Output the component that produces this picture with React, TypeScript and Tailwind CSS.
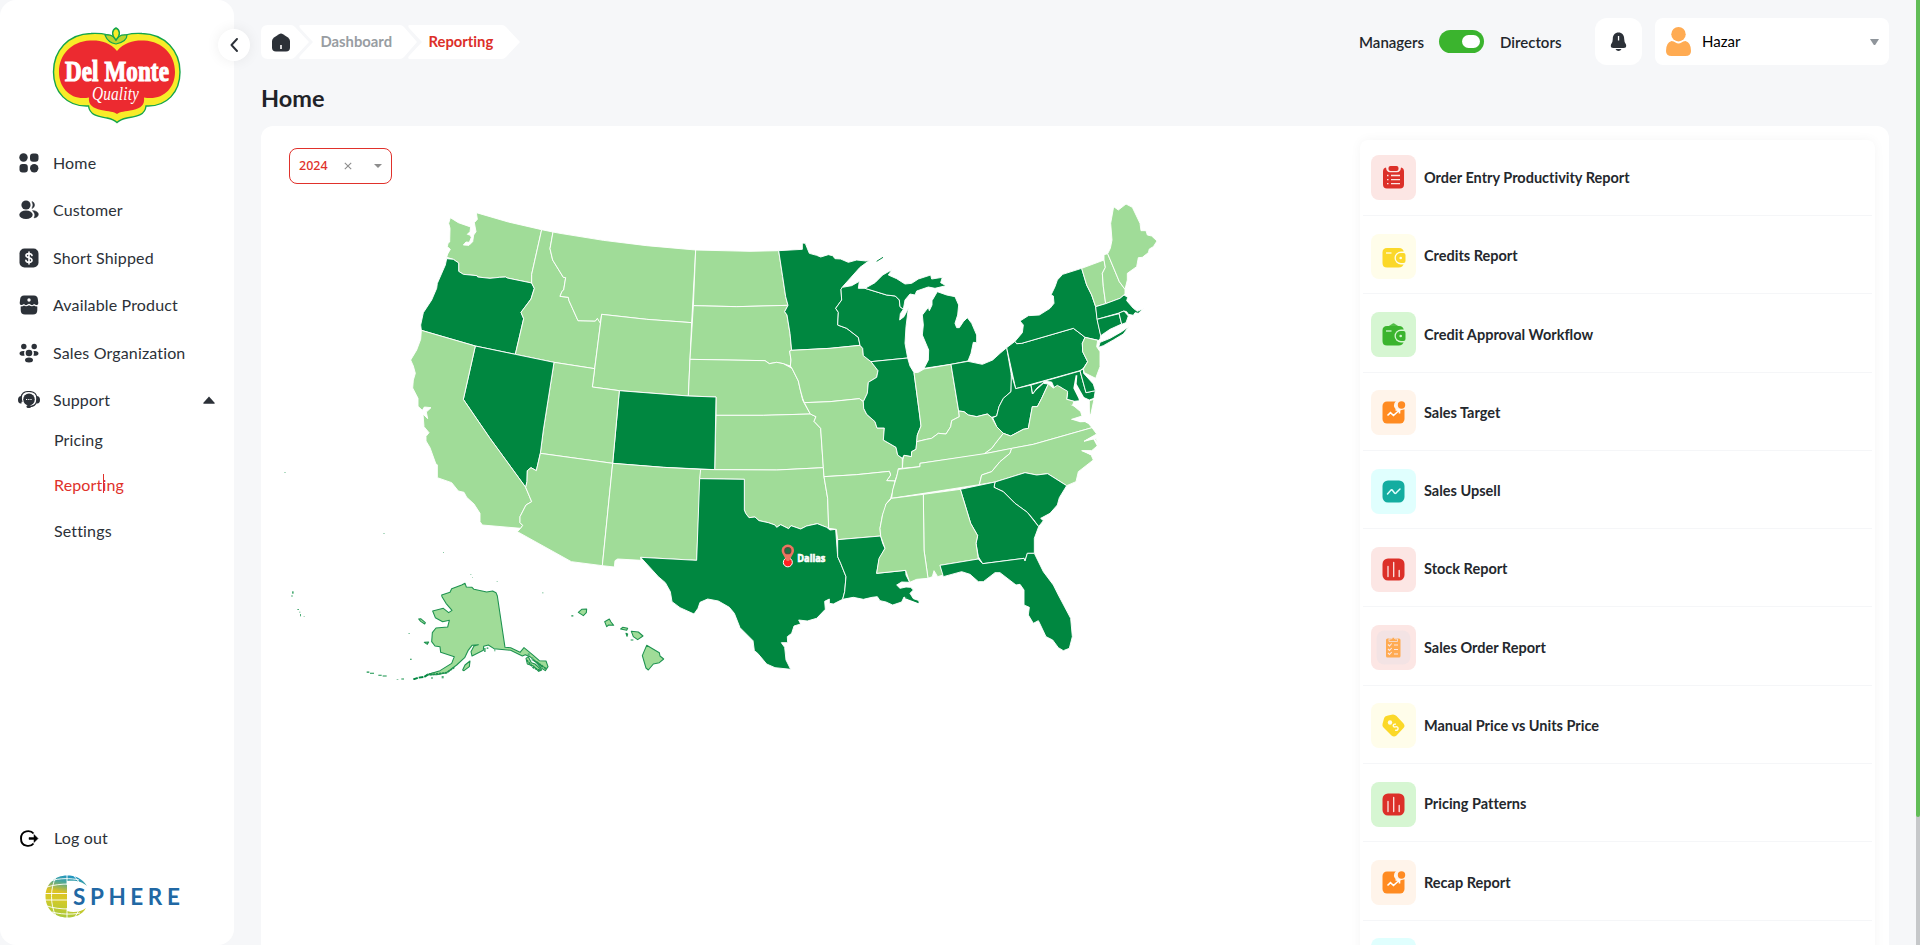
import React from "react";

const LIGHT = "#a0dc98";
const DARK = "#008740";

type Shape = { id: string; dark?: boolean; d: string };

const STATES: Shape[] = [
  { id: "WA", d: "541,113 565,128 602,141 600,155 592,163 600,165 604,172 598,187 588,186 580,195 597,196 608,185 611,165 618,155 613,128 622,118 619,98 715,126 815,149 785,283 785,309 712,294 707,291 688,292 660,295 623,291 621,287 580,283 566,274 566,249 550,238 530,232 533,222 541,208 532,200 534,190 539,186 540,145 536,130" },
  { id: "OR", dark: true, d: "530,236 550,238 566,249 566,274 580,283 621,287 623,291 660,295 688,292 707,291 712,294 785,309 793,325 783,357 753,397 761,416 736,523 616,498 454,451 452,435 460,398 485,360 500,325 502,310 526,255" },
  { id: "ID", d: "815,149 849,156 840,206 848,240 880,292 887,293 881,330 876,334 870,349 895,352 897,362 924,422 976,423 982,415 992,427 974,566 852,547 736,523 761,416 753,397 783,357 793,325 785,309 785,283" },
  { id: "MT", d: "849,156 870,160 1000,181 1130,197 1277,210 1265,428 1130,418 995,403 991,430 982,415 976,423 924,422 897,362 895,352 870,349 876,334 881,330 887,293 880,292 848,240 840,206" },
  { id: "WY", d: "995,403 1130,418 1265,428 1255,648 1048,632 967,621" },
  { id: "ND", d: "1277,210 1440,214 1526,212 1538,290 1547,350 1554,376 1400,380 1270,377" },
  { id: "SD", d: "1270,377 1400,380 1554,376 1544,395 1551,405 1560,460 1565,511 1559,513 1563,540 1561,558 1540,551 1520,547 1498,551 1485,542 1260,538" },
  { id: "NE", d: "1260,538 1485,542 1498,551 1520,547 1540,551 1566,565 1585,603 1591,630 1598,660 1603,670 1621,702 1480,706 1338,706 1338,651 1255,648" },
  { id: "KS", d: "1338,706 1480,706 1621,702 1638,710 1632,724 1652,745 1660,863 1520,870 1334,869" },
  { id: "CO", dark: true, d: "1048,632 1255,648 1338,651 1334,869 1180,862 1028,850" },
  { id: "UT", d: "852,547 974,566 967,621 1048,632 1028,850 811,820 820,750" },
  { id: "NV", dark: true, d: "616,498 736,523 852,547 820,750 811,820 799,872 783,863 772,872 771,905 767,922 660,775 580,658" },
  { id: "CA", d: "454,451 616,498 580,658 660,775 767,922 785,965 768,975 750,1010 750,1028 758,1036 752,1045 637,1035 630,1025 630,1000 612,972 590,952 582,937 565,933 545,908 502,893 502,855 497,850 480,803 468,783 468,769 477,758 462,740 459,702 473,716 469,696 483,683 463,681 457,691 444,679 444,655 428,624 430,600 436,580 430,558 422,540 440,510 452,478" },
  { id: "AZ", d: "811,820 1028,850 997,1157 904,1145 742,1055 752,1045 758,1036 750,1028 750,1010 768,975 785,965 767,922 771,905 772,872 783,863 799,872" },
  { id: "NM", d: "1028,850 1180,862 1292,868 1280,1141 1112,1132 1113,1141 1043,1137 1035,1142 1033,1161 997,1157" },
  { id: "OK", d: "1292,868 1334,869 1520,870 1660,863 1662,890 1673,955 1676,1045 1670,1042 1642,1031 1610,1038 1592,1047 1563,1037 1556,1046 1532,1034 1520,1042 1515,1035 1495,1028 1467,1022 1455,1011 1437,1013 1427,1000 1423,990 1423,898 1289,896" },
  { id: "TX", dark: true, d: "1289,896 1423,898 1423,990 1427,1000 1437,1013 1455,1011 1467,1022 1495,1028 1515,1035 1520,1042 1532,1034 1556,1046 1563,1037 1592,1047 1610,1038 1642,1031 1670,1042 1680,1050 1697,1048 1703,1130 1712,1150 1728,1190 1724,1235 1718,1258 1690,1272 1678,1270 1678,1257 1664,1264 1666,1288 1640,1315 1612,1323 1586,1320 1592,1332 1572,1338 1565,1360 1552,1370 1553,1388 1534,1388 1544,1402 1548,1440 1562,1468 1515,1463 1490,1452 1463,1420 1453,1412 1449,1382 1410,1343 1393,1300 1378,1282 1345,1263 1313,1257 1290,1267 1284,1285 1272,1302 1230,1283 1206,1265 1201,1235 1186,1208 1165,1190 1112,1132 1280,1141" },
  { id: "MN", dark: true, d: "1526,212 1597,208 1597,189 1606,190 1611,203 1618,220 1640,226 1652,231 1675,224 1688,227 1695,236 1712,237 1735,247 1760,240 1788,243 1800,240 1770,262 1718,320 1713,328 1715,360 1697,385 1705,397 1703,435 1730,445 1765,472 1770,496 1680,505 1565,511 1560,460 1551,405 1544,395 1554,376 1547,350 1538,290" },
  { id: "IA", d: "1565,511 1680,505 1770,496 1778,505 1780,527 1803,545 1824,572 1820,592 1795,607 1792,640 1780,665 1768,656 1680,665 1603,668 1598,655 1591,630 1585,603 1566,565 1561,558 1563,540 1559,513" },
  { id: "MO", d: "1603,668 1680,665 1768,656 1780,665 1781,685 1790,703 1815,725 1821,744 1843,744 1840,780 1878,802 1883,825 1897,835 1897,865 1885,866 1883,880 1875,903 1850,902 1862,885 1858,874 1760,884 1662,890 1660,863 1652,745 1632,724 1638,710 1621,702" },
  { id: "AR", d: "1662,890 1760,884 1858,874 1862,885 1850,902 1875,903 1868,935 1862,955 1848,972 1846,990 1838,1003 1830,1045 1832,1068 1703,1079 1699,1048 1676,1045 1673,955" },
  { id: "LA", dark: true, d: "1703,1079 1832,1068 1838,1090 1845,1105 1827,1140 1820,1180 1907,1171 1908,1185 1919,1207 1895,1206 1880,1215 1890,1225 1908,1221 1922,1222 1930,1230 1920,1240 1930,1256 1948,1262 1944,1270 1915,1258 1902,1251 1895,1266 1868,1275 1848,1266 1830,1262 1822,1250 1806,1252 1780,1258 1750,1252 1718,1258 1724,1235 1728,1190 1712,1150 1703,1130" },
  { id: "WI", dark: true, d: "1717,322 1745,317 1768,304 1765,325 1785,325 1850,345 1876,348 1888,360 1890,380 1900,388 1891,401 1889,420 1902,410 1915,385 1908,440 1905,490 1913,534 1803,545 1780,527 1778,505 1770,496 1765,472 1730,445 1703,435 1705,397 1697,385 1715,360 1713,328" },
  { id: "MI-U", dark: true, d: "1785,325 1815,308 1838,285 1866,269 1855,285 1880,296 1905,312 1925,310 1945,297 1982,285 1985,297 2017,292 2012,308 2028,317 1995,325 1975,321 1940,333 1935,345 1920,342 1905,360 1900,388 1890,380 1888,360 1876,348 1850,345" },
  { id: "MI-L", dark: true, d: "2002,335 2030,345 2055,350 2066,375 2063,405 2055,430 2060,443 2068,443 2080,425 2092,413 2105,430 2120,465 2120,488 2110,487 2103,520 2094,543 2043,553 1962,565 1975,540 1976,510 1957,465 1960,435 1957,405 1975,382 1978,392 1986,375 1986,362" },
  { id: "IL", dark: true, d: "1803,545 1913,534 1920,558 1932,578 1949,705 1953,738 1942,765 1940,790 1938,808 1925,815 1924,830 1902,826 1897,835 1883,825 1878,802 1840,780 1843,744 1821,744 1815,725 1790,703 1781,685 1780,665 1792,640 1795,607 1820,592 1824,572" },
  { id: "IN", d: "1932,578 1945,577 1962,567 2043,553 2066,693 2068,710 2045,722 2042,740 2028,762 2005,760 1985,775 1970,778 1940,785 1942,765 1953,738 1949,705" },
  { id: "OH", dark: true, d: "2043,553 2094,544 2137,553 2168,540 2190,520 2210,503 2225,590 2223,635 2200,655 2187,680 2180,708 2165,712 2152,702 2120,710 2095,705 2082,695 2066,693" },
  { id: "PA", dark: true, d: "2210,503 2235,484 2240,491 2255,490 2410,445 2430,460 2445,472 2437,490 2438,515 2453,545 2440,565 2430,572 2237,626" },
  { id: "NY", dark: true, d: "2235,484 2257,458 2260,435 2250,423 2275,407 2308,405 2340,385 2352,370 2350,348 2343,345 2355,320 2362,300 2378,283 2435,265 2450,315 2465,345 2477,380 2482,418 2492,465 2490,478 2485,481 2445,472 2430,460 2410,445 2255,490 2240,491" },
  { id: "LI", dark: true, d: "2486,502 2490,487 2520,475 2555,455 2576,440 2560,462 2530,480 2500,497" },
  { id: "VT", d: "2435,265 2502,240 2506,262 2497,280 2500,320 2507,371 2477,380 2465,345 2450,315" },
  { id: "NH", d: "2502,240 2502,224 2513,221 2548,305 2565,328 2565,342 2550,355 2507,371 2500,320 2497,280 2506,262" },
  { id: "ME", d: "2513,221 2521,205 2526,180 2522,130 2531,80 2545,90 2568,72 2587,82 2610,130 2613,152 2628,152 2632,165 2645,168 2661,183 2650,200 2638,207 2635,218 2617,232 2605,233 2600,260 2572,280 2572,300 2565,328 2548,305" },
  { id: "MA", dark: true, d: "2477,380 2507,371 2550,355 2562,345 2573,352 2570,362 2590,385 2602,394 2620,386 2605,400 2595,398 2590,406 2575,403 2570,395 2562,393 2547,399 2481,418" },
  { id: "CT", dark: true, d: "2481,418 2547,401 2555,432 2520,448 2492,467" },
  { id: "RI", dark: true, d: "2547,399 2562,393 2575,408 2568,428 2555,433" },
  { id: "NJ", d: "2445,472 2483,481 2480,500 2490,515 2490,560 2477,595 2443,578 2440,567 2453,545 2438,515 2437,490" },
  { id: "WV", dark: true, d: "2224,582 2237,626 2283,615 2287,642 2300,628 2320,610 2335,612 2315,655 2302,680 2287,680 2275,745 2260,748 2222,768 2200,760 2180,740 2168,713 2180,708 2187,680 2200,655 2223,635" },
  { id: "MD", dark: true, d: "2283,615 2430,573 2448,638 2476,632 2472,655 2458,660 2440,652 2425,640 2430,662 2412,664 2390,658 2393,640 2372,622 2352,622 2345,606 2325,604 2300,625 2288,642" },
  { id: "DE", dark: true, d: "2430,572 2440,567 2441,580 2470,612 2476,632 2448,638" },
  { id: "VA", d: "2335,612 2350,624 2362,616 2393,634 2390,658 2412,664 2408,675 2432,695 2436,708 2405,718 2440,722 2455,730 2466,743 2290,793 2150,820 2140,823 2165,805 2180,785 2200,760 2222,768 2260,748 2275,745 2287,680 2302,680 2315,655" },
  { id: "ESVA", d: "2458,662 2472,658 2463,700 2458,710" },
  { id: "KY", d: "1897,865 1899,838 1902,826 1924,830 1925,815 1938,808 1940,785 1970,778 1985,775 2005,760 2028,762 2042,740 2045,722 2068,710 2066,693 2082,695 2095,705 2120,710 2152,702 2165,712 2180,740 2200,760 2180,785 2165,805 2140,823 1950,850 1950,860" },
  { id: "TN", d: "1885,868 1950,860 1950,850 2150,820 2225,805 2220,820 2190,845 2165,875 2135,885 2128,914 1865,955 1868,930 1880,890" },
  { id: "NC", d: "2225,805 2290,793 2466,743 2480,762 2442,784 2478,775 2485,795 2465,812 2435,812 2463,824 2470,840 2425,875 2418,905 2390,917 2333,881 2300,885 2265,878 2175,906 2128,914 2135,885 2165,875 2190,845 2220,820" },
  { id: "SC", dark: true, d: "2175,906 2265,878 2300,885 2333,881 2390,917 2368,953 2362,975 2340,1000 2312,1015 2320,1022 2306,1040 2290,1018 2272,997 2235,970 2200,935 2172,922" },
  { id: "GA", dark: true, d: "2071,928 2175,906 2172,922 2200,935 2235,970 2272,997 2306,1040 2293,1075 2293,1120 2272,1120 2265,1143 2262,1135 2138,1151 2125,1130 2118,1090 2123,1067 2102,1030" },
  { id: "AL", d: "1960,943 2071,928 2102,1030 2123,1067 2118,1090 2125,1137 2010,1156 2020,1185 2003,1190 1992,1172 1987,1190 1974,1195 1962,1110" },
  { id: "MS", d: "1865,955 1960,943 1962,1110 1974,1195 1940,1198 1919,1207 1907,1171 1820,1180 1827,1135 1845,1105 1832,1068 1830,1045 1838,1003 1848,972" },
  { id: "FL", dark: true, d: "2010,1156 2125,1137 2138,1151 2262,1135 2265,1143 2272,1120 2293,1120 2320,1175 2350,1215 2365,1245 2402,1315 2407,1370 2398,1405 2380,1412 2365,1403 2348,1380 2328,1370 2310,1332 2305,1322 2290,1330 2275,1305 2278,1282 2262,1275 2262,1230 2250,1213 2238,1215 2190,1178 2175,1178 2140,1205 2125,1205 2100,1183 2075,1175 2020,1190" },
];

const OUTLINED = [
  "515,1245 540,1237 545,1226 575,1215 585,1210 589,1221 606,1222 612,1228 650,1236 668,1233 678,1238 682,1248 705,1402 722,1403 750,1417 762,1403 790,1426 808,1442 828,1443 834,1460 826,1472 812,1463 798,1446 780,1430 766,1424 757,1428 722,1411 672,1406 655,1395 641,1399 640,1411 606,1428 603,1415 612,1398 625,1394 606,1396 594,1412 584,1433 560,1455 530,1478 500,1484 470,1484 510,1472 545,1450 553,1430 512,1417 510,1400 495,1398 485,1385 487,1358 498,1344 533,1341 538,1321 518,1325 496,1313 488,1293 520,1285 536,1298 546,1291 528,1270 516,1250",
  "578,1470 585,1455 600,1443 598,1460 582,1472",
  "768,1435 775,1430 784,1448 795,1452 815,1470 806,1474 790,1458 772,1452",
  "446,1317 452,1316 466,1328 464,1332 452,1324",
  "463,1387 476,1386 472,1393",
  "925,1297 935,1288 950,1287 949,1298 940,1307",
  "1004,1325 1018,1317 1023,1326 1031,1336 1016,1335 1010,1340",
  "1052,1347 1058,1342 1073,1345 1070,1351",
  "1084,1354 1105,1356 1119,1368 1103,1379 1090,1370",
  "1068,1360 1073,1362 1071,1369",
  "1130,1396 1168,1418 1170,1428 1181,1437 1168,1448 1150,1452 1135,1470 1128,1464 1117,1427",
];

const SPECKS: [number, number, number, number][] = [
  [43, 876, 4, 2], [340, 1059, 4, 2], [519, 1116, 3, 2], [601, 1183, 3, 2], [606, 1191, 2, 2], [680, 1204, 3, 2],
  [66, 1234, 5, 7], [64, 1246, 4, 4], [82, 1287, 5, 3], [88, 1295, 3, 3], [90, 1302, 3, 7], [101, 1308, 3, 2],
  [415, 1359, 5, 2], [420, 1436, 5, 4], [817, 1237, 3, 3], [904, 1305, 6, 5], [1082, 1378, 8, 4],
  [290, 1474, 8, 5], [300, 1478, 12, 4], [325, 1484, 10, 4], [338, 1486, 12, 4], [380, 1497, 5, 2], [394, 1495, 8, 4],
  [412, 1500, 4, 2], [515, 1488, 6, 7], [483, 1492, 6, 4], [642, 1404, 5, 12], [650, 1402, 5, 5], [673, 1405, 3, 9],
  [773, 1420, 6, 7], [785, 1432, 5, 10],
];

const UsMap = () => (
  <svg className="block h-[500px] w-[900px]" viewBox="0 0 2700 1500">
    {STATES.map((s) => (
      <polygon key={s.id} points={s.d} fill={s.dark ? DARK : LIGHT} stroke="#fff" strokeWidth="2.8" strokeLinejoin="round" />
    ))}
    <path d="M2417 586 L2422 586 L2420 612 L2432 634 L2444 655 L2456 668 L2460 712 L2460 732 L2448 728 L2438 690 L2400 674 L2432 678 L2425 655 L2410 625 Z" fill="#fff" />
    <path d="M2402 718 L2430 716 L2450 726 L2430 727 Z M2442 782 L2470 768 L2488 795 L2482 800 L2470 778 Z M2436 811 L2465 812 L2480 808 L2462 826 Z" fill="#fff" />
    <path d="M1820 244 L1839 232 M1905 1253 L1946 1268" stroke={DARK} strokeWidth="3" />
    <path d="M430 1498 L445 1493 L462 1491 L475 1483 L500 1479 L520 1476" stroke={DARK} strokeWidth="6" strokeDasharray="14 3" fill="none" />
    {OUTLINED.map((d) => (
      <polygon key={d} points={d} fill={LIGHT} stroke="#1d9250" strokeWidth="3.2" strokeLinejoin="round" />
    ))}
    <path d="M480 1484 L530 1478 L553 1462 M770 1440 L790 1463 L812 1472 M790 1440 L820 1462 M800 1446 L828 1466" stroke="#1d9250" strokeWidth="5" strokeDasharray="7 2" fill="none" />
    {SPECKS.map(([x, y, w, h]) => (
      <rect key={`${x}-${y}`} x={x} y={y} width={w} height={h} fill="#4fae78" />
    ))}
    <circle cx="1553.500" cy="1147" r="13.500" fill="#f22" stroke="#fff" strokeWidth="3" />
    <path d="M1550 1143 L1536.500 1119 A18.500 18.500 0 1 1 1570.500 1119 L1557 1143 Z" fill="#ee7460" />
    <circle cx="1553.500" cy="1112" r="11" fill="#5a4a3c" />
    <circle cx="1553.500" cy="1112" r="8" fill="#1f6f42" />
    <text x="1582" y="1146" textLength="84" lengthAdjust="spacingAndGlyphs" fontFamily="Open Sans, Noto Sans, sans-serif" fontSize="33" fontWeight="700" fill="#fff" stroke="#fff" strokeWidth="2">Dallas</text>
  </svg>
);

const DelMonteLogo = () => (
  <svg className="h-[98px] w-[130px]" viewBox="0 0 130 98">
    <path d="M65 12 C72 7 81 6 90 6.500 C113 7 128 24 128 45 C128 65 115 80 94 79 C93 89 83 89.500 75 91 C70 92 67 93.500 65 95.500 C63 93.500 60 92 55 91 C47 89.500 38 89 36.500 79 C15 80 1.500 65 1.500 45 C1.500 24 16 7 39 6.500 C49 6 58 7 65 12 Z" fill="#f8ec28" stroke="#14a54c" strokeWidth="1.400" />
    <path d="M65 24 C72 15 83 13 92 13.500 C111 14.500 123 28 123 45 C123 62 110 74 92 70.500 C93 78 89 81 81 83 C73 84.500 68 84.500 65 87 C62 84.500 57 84.500 49 83 C41 81 36 78 37 70.500 C20 74 7 62 7 45 C7 28 19 14.500 38 13.500 C48 13 58 15 65 24 Z" fill="#ec2a30" />
    <path d="M64 17 C54 15 54 9 53 8 C59 7 62 9 64 13 C66 9 69 7 75 8 C75 12 73 15 64 17 Z" fill="#b9d52d" stroke="#14a54c" strokeWidth="1.200" />
    <path d="M64 13 C59 8 60 3 64 1 C68 3 69 8 64 13 Z" fill="#f8ec28" stroke="#14a54c" strokeWidth="1.400" />
    <text x="13" y="53.500" textLength="104" lengthAdjust="spacingAndGlyphs" fontFamily="Liberation Serif, serif" fontSize="29" fontWeight="700" fill="#fff" stroke="#fff" strokeWidth="1.200">Del Monte</text>
    <text x="40" y="72.500" textLength="47" lengthAdjust="spacingAndGlyphs" fontFamily="Liberation Serif, serif" fontSize="18" fontStyle="italic" fill="#fff">Quality</text>
  </svg>
);

const SphereLogo = () => (
  <svg className="h-[46px] w-[136px]" viewBox="0 0 136 46">
    <defs>
      <linearGradient id="globe" x1="0.600" y1="0" x2="0.400" y2="1">
        <stop offset="0" stopColor="#1d93c4" />
        <stop offset="0.180" stopColor="#4aa79a" />
        <stop offset="0.420" stopColor="#dcc223" />
        <stop offset="0.600" stopColor="#d6ca28" />
        <stop offset="1" stopColor="#a9c93a" />
      </linearGradient>
    </defs>
    <path d="M42 12 C37 4 30 1.500 22 1.500 C10 1.500 0.500 10 0.500 22.500 C0.500 35 10 43.500 22 43.500 C30 43.500 37 41 41 34 C36 38 28 39 22 37 V7 C30 6 37 7 42 12 Z" fill="url(#globe)" />
    <path d="M0 19.500 H22 M0 26 H22 M2 13 C8 11 16 10 24 10 M2 32 C8 34 16 35 24 35 M6 7 C14 4 26 4 34 6 M7 38 C14 40 26 41 35 39 M22 0 V11 M22 34 V45 M11 3 C5 14 5 31 11 42 M29 2 L34 8 M34 36 L30 43" fill="none" stroke="#fff" strokeWidth="0.900" />
    <text x="28" y="30.500" textLength="107" fontFamily="Lato, sans-serif" fontSize="22.500" fontWeight="700" fill="#2168a4">SPHERE</text>
  </svg>
);

const ink = "#2c3138";

const navIcons: Record<string, React.ReactNode> = {
  Home: (
    <g fill={ink}><circle cx="4.500" cy="4.500" r="4.200" /><rect x="11" y="0.500" width="8.500" height="8.300" rx="3" /><rect x="0.500" y="11" width="8.300" height="8.500" rx="3" /><circle cx="15.200" cy="15.300" r="4.200" /></g>
  ),
  Customer: (
    <g fill={ink}><circle cx="7" cy="5" r="4.600" /><ellipse cx="7" cy="14.800" rx="6.700" ry="4.300" /><path d="M13 1.500 a3.700 3.700 0 0 1 0 7 a7 7 0 0 0 0 -7Z M13.500 10.700 c8 0 7 7 1.500 7.100 c1.500 -2 1 -5 -1.500 -7.100Z" stroke={ink} strokeWidth="0.600" /></g>
  ),
  "Short Shipped": (
    <g><rect x="0.500" y="0.500" width="19" height="19" rx="5" fill={ink} /><path d="M13 7.500 C12.500 5 7 5 7 7.600 C7 10.500 13 9.200 13 12.300 C13 15 7.300 15 6.900 12.400 M10 4 V16" fill="none" stroke="#fff" strokeWidth="1.600" strokeLinecap="round" /></g>
  ),
  "Available Product": (
    <g fill={ink}><path d="M5 0.500 H15 Q18.500 0.500 18.800 4 L19.300 8 Q19.500 10.500 17 10 L15 9 Q13.500 11 11.500 9.500 L10 8.700 L8.500 9.500 Q6.500 11 5 9 L3 10 Q0.500 10.500 0.700 8 L1.200 4 Q1.500 0.500 5 0.500Z" /><path d="M1.700 11.500 Q4 11.500 5 10.500 Q7 12 10 10.200 Q13 12 15 10.500 Q16 11.500 18.300 11.500 V15 Q18.300 19.500 14 19.500 H6 Q1.700 19.500 1.700 15Z" /><circle cx="10" cy="5" r="1.700" fill="#fff" /></g>
  ),
  "Sales Organization": (
    <g fill={ink}><circle cx="4.800" cy="3.500" r="2.700" /><circle cx="15.200" cy="3.500" r="2.700" /><circle cx="10" cy="10" r="3.300" /><ellipse cx="10" cy="17" rx="4" ry="2.500" /><path d="M5.500 8 Q0.500 7.500 0.500 10.500 Q0.500 13 5.500 12.800 Q4.500 10 5.500 8Z M14.500 8 Q19.500 7.500 19.500 10.500 Q19.500 13 14.500 12.800 Q15.500 10 14.500 8Z" /></g>
  ),
};

const NAV = ["Home", "Customer", "Short Shipped", "Available Product", "Sales Organization"];

const NavRow = ({ label }: { label: string }) => (
  <li className="flex h-[47.500px] items-center gap-[14px] pl-[19px]">
    <svg className="size-[20px]" viewBox="0 0 20 20">{navIcons[label]}</svg>
    <span>{label}</span>
  </li>
);

const Sidebar = () => (
  <aside className="relative flex h-full w-[234px] shrink-0 flex-col rounded-2xl bg-white text-[16px] tracking-[0.150px] text-[#2c3138]">
    <div className="flex h-[139px] justify-center pt-[27px]">
      <DelMonteLogo />
    </div>
    <ul className="flex flex-col">
      {NAV.map((n) => <NavRow key={n} label={n} />)}
      <li className="flex h-[47.500px] items-center gap-[13px] pr-[19px] pl-[18px]">
        <svg className="h-[18px] w-[22px]" viewBox="0 0 22 18">
          <path d="M4 11 C1 1 8 0.500 11 0.500 C15 0.500 20.500 2 18.500 11 C17.500 15 14 15.500 11 15.500" fill="none" stroke={ink} strokeWidth="1.200" />
          <ellipse cx="11" cy="8.500" rx="5.800" ry="6" fill={ink} />
          <path d="M3.500 5 V12.500 Q0 13 0 8.800 Q0 5 3.500 5Z M18.500 5 V12.500 Q22 13 22 8.800 Q22 5 18.500 5Z" fill={ink} />
          <rect x="8.500" y="14" width="4.500" height="3" rx="1.500" fill={ink} />
          <path d="M8 8.500 H14" stroke="#fff" strokeWidth="1" strokeDasharray="1.200 1" />
        </svg>
        <span className="flex-1">Support</span>
        <svg className="h-2 w-3" viewBox="0 0 12 8"><path d="M6 0.500 L11.800 7 Q12 7.700 11 7.700 H1 Q0 7.700 0.200 7Z" fill={ink} /></svg>
      </li>
    </ul>
    <ul className="flex flex-col pl-[54px]">
      <li className="flex h-[31px] items-center">Pricing</li>
      <li className="flex h-[59px] items-center text-[#e0312b]">
        <span className="relative">Reporting<span className="absolute top-[1px] left-[49px] h-[19px] w-px bg-[#e0312b]" /></span>
      </li>
      <li className="flex h-[33px] items-center">Settings</li>
    </ul>
    <div className="mt-auto flex h-[34px] items-center gap-[15px] pl-[20px]">
      <svg className="h-[17px] w-[19px]" viewBox="0 0 19 17">
        <path d="M13.500 3.500 C11 0 1 -0.500 1 8.500 C1 17.500 11 17 13.500 13.500" fill="none" stroke="#000" strokeWidth="1.900" />
        <path d="M9 7.600 H14 V4.500 L18 8.500 L14 12.500 V9.400 H9Z" fill="#000" stroke="#000" strokeWidth="0.500" />
      </svg>
      <span>Log out</span>
    </div>
    <div className="mt-[19px] mb-[25px] pl-[45px]">
      <SphereLogo />
    </div>
    <button className="absolute top-[29px] left-[218px] flex size-[32px] items-center justify-center rounded-full bg-white shadow-[0_0_14px_rgba(0,0,0,0.070)]">
      <svg className="h-[14px] w-2" viewBox="0 0 8 14"><path d="M7 1 L1.500 7 L7 13" fill="none" stroke={ink} strokeWidth="1.900" strokeLinecap="round" strokeLinejoin="round" /></svg>
    </button>
  </aside>
);

const Breadcrumb = () => (
  <nav className="grid h-[34px] w-[260px] text-[14.800px] font-bold">
    <svg className="col-start-1 row-start-1 h-[34px] w-[260px]" viewBox="0 0 260 34">
      <path d="M7 0 H30 Q32 0 34 2 L48 17 L34 32 Q32 34 30 34 H7 Q0 34 0 27 V7 Q0 0 7 0Z M40 0 H139 Q141 0 143 2 L156 17 L143 32 Q141 34 139 34 H40 Q37 34 39 31 L52 17 L39 3 Q37 0 40 0Z M149 0 H241 Q243 0 245 2 L259 17 L245 32 Q243 34 241 34 H149 Q146 34 148 31 L161 17 L148 3 Q146 0 149 0Z" fill="#fff" />
      <path d="M11 16 Q11 14 13 12.500 L18 9.200 Q20 8 22 9.200 L27 12.500 Q29 14 29 16 V22.500 Q29 26.500 25 26.500 H15 Q11 26.500 11 22.500Z" fill={ink} />
      <rect x="19.200" y="20" width="1.600" height="4" fill="#fff" />
    </svg>
    <div className="col-start-1 row-start-1 flex items-center pl-[59.500px]">
      <span className="w-[108px] text-[#989da2]">Dashboard</span>
      <span className="text-[#dc2f29]">Reporting</span>
    </div>
  </nav>
);

const TopBar = () => (
  <header className="flex h-[47px] shrink-0 items-center text-[15px]">
    <Breadcrumb />
    <div className="ml-auto flex items-center font-semibold text-[#22262b]">
      <span className="w-[80px] pt-px">Managers</span>
      <span className="flex h-[23px] w-[45px] items-center justify-end rounded-full bg-[#3bb42e] pr-[4px]">
        <span className="h-[13px] w-[18px] rounded-full bg-white" />
      </span>
      <span className="ml-[16px] w-[95px] pt-px">Directors</span>
    </div>
    <div className="flex h-[47px] w-[47px] items-center justify-center rounded-xl bg-white">
      <svg className="h-[19px] w-[17px]" viewBox="0 0 17 19">
        <path d="M8.500 0.500 C12 0.500 14.200 3 14.200 7 Q14.200 10.500 16 12.500 Q17 16 13.500 16 H3.500 Q0 16 1 12.500 Q2.800 10.500 2.800 7 C2.800 3 5 0.500 8.500 0.500Z M5.500 17 H11.500 Q10.500 19 8.500 19 Q6.500 19 5.500 17Z" fill={ink} />
        <rect x="7.900" y="4" width="1.300" height="4.500" fill="#fff" />
      </svg>
    </div>
    <div className="ml-[13px] flex h-[47px] w-[234px] items-center rounded-lg bg-white pr-[10px] pl-[11px] text-black">
      <svg className="h-[29px] w-[25px]" viewBox="0 0 25 29">
        <circle cx="12.500" cy="7.200" r="7.200" fill="#ffab52" />
        <path d="M5.500 14 Q8 14.300 9.500 15.500 Q12.500 17.500 15.500 15.500 Q17 14.300 19.500 14 Q25 15.500 25 24 Q25 29 19.500 29 H5.500 Q0 29 0 24 Q0 15.500 5.500 14Z" fill="#ffab52" />
      </svg>
      <span className="ml-[11px] flex-1">Hazar</span>
      <svg className="h-[6px] w-[9px]" viewBox="0 0 9 6"><path d="M0 0 H9 L5.500 5.500 Q4.500 6.500 3.500 5.500Z" fill="#8f959b" /></svg>
    </div>
  </header>
);

const clipboard = (
  <g>
    <path d="M4 1.500 Q1 2 1 5.500 V18.500 Q1 22.500 5 22.500 H18 Q22 22.500 22 18.500 V5.500 Q22 2 19 1.500 Q18.500 6.300 15 6.300 H8 Q4.500 6.300 4 1.500Z" fill="#dc3029" />
    <rect x="6.500" y="0" width="10" height="4.900" rx="2" fill="#dc3029" />
    <path d="M9 9.500 H18 M9 13.700 H18 M9 17.700 H18 M5 9.500 H6.500 M5 13.700 H6.500 M5 17.700 H6.500" stroke="#fce6e4" strokeWidth="1.300" />
  </g>
);
const wallet = (c: string, bg: string, flap = false) => (
  <g>
    {flap && <path d="M6 3.500 L10 1 Q11.500 -0.500 13 1 L17 3.500Z" fill={c} opacity="0.85" />}
    <path d="M5 3 H17 Q21.500 3 22 8 V18 Q21 22.500 16.500 22.500 H5 Q0.500 22.500 0.500 18 V7.500 Q0.500 3 5 3Z" fill={c} />
    <path d="M24 6.500 H19 A6.500 6.500 0 0 0 19 19.500 H24Z" fill={bg} />
    <path d="M18.800 8 H21.500 Q23.500 8 23.500 10 V16 Q23.500 18 21.500 18 H18.800 A5 5 0 0 1 18.800 8Z" fill={c} />
    <circle cx="18.700" cy="13" r="1.300" fill={bg} />
    <path d="M4 8 H9.500" stroke={bg} strokeWidth="1.300" />
  </g>
);
const target = (
  <g>
    <rect x="0.500" y="0.500" width="22" height="22" rx="4.500" fill="#ff8b22" />
    <path d="M15 -0.500 A5 5 0 0 0 19.500 9 L24 8 V-1Z" fill="#fff4ea" />
    <circle cx="19.500" cy="4" r="3.700" fill="#ff8b22" />
    <path d="M5.500 14.500 L8.500 11.700 L11.500 14.500 L17 9.500 M13.500 9 H17.500 V12.500" fill="none" stroke="#fff" strokeWidth="1.600" />
  </g>
);
const bars = (
  <g>
    <rect x="0.500" y="0.500" width="22" height="22" rx="5.500" fill="#dc3029" />
    <path d="M6 8.500 V18.500 M11.700 4.500 V18.500 M17.200 12.500 V18.500" stroke="#fce6e4" strokeWidth="1.300" strokeLinecap="round" />
  </g>
);
const upsell = (
  <g>
    <rect x="0.500" y="0.500" width="22" height="22" rx="5.500" fill="#14ada0" />
    <path d="M5.500 14 L9 10 Q10 9.500 11 11 L12.500 13 Q13.500 14 14.500 12.500 L18 9" fill="none" stroke="#e3fffe" strokeWidth="1.500" strokeLinecap="round" />
  </g>
);
const checklist = (
  <g>
    <rect x="-5.500" y="-5.500" width="34" height="34" rx="8" fill="#f3e3e4" />
    <rect x="4" y="2.500" width="14.500" height="19" rx="1.500" fill="#ffab52" />
    <path d="M7 3 H9.500 Q11.300 -0.500 13 3 H15.500 V5.500 H7Z" fill="#ffab52" stroke="#f3e3e4" strokeWidth="0.800" />
    <path d="M6 8.500 L7.500 10 L9.700 7.500 M6 13 L7.500 14.500 L9.700 12 M6 17 L7.500 18.500 L9.700 16 M12 9 H16 M12 13.500 H16 M12 18 H16" fill="none" stroke="#fbe9e7" strokeWidth="1.100" />
  </g>
);
const tag = (
  <g>
    <path d="M2 4.500 Q2.500 2 6 1.500 L11 0.500 Q13 0.500 14.500 2 L21.500 9.500 Q23.500 12 21.500 14 L14.500 21.500 Q12 23.500 9.500 21.500 L1.500 13.500 Q0 12 0.500 10Z" fill="#fbd829" />
    <circle cx="8" cy="8.500" r="2.200" fill="#fffdea" />
    <path d="M14.500 10.500 Q12 9.500 11.500 11.500 Q11.500 13 13.500 13 Q16 13 15.700 15 Q15 17.500 12.500 16" fill="none" stroke="#fffdea" strokeWidth="1.400" transform="rotate(-12 13 13)" />
  </g>
);

const REPORTS: { label: string; bg: string; icon: React.ReactNode }[] = [
  { label: "Order Entry Productivity Report", bg: "bg-[#fce6e4]", icon: clipboard },
  { label: "Credits Report", bg: "bg-[#fffdea]", icon: wallet("#fbd829", "#fffdea") },
  { label: "Credit Approval Workflow", bg: "bg-[#d6f6d2]", icon: wallet("#3bb42e", "#d6f6d2", true) },
  { label: "Sales Target", bg: "bg-[#fff4ea]", icon: target },
  { label: "Sales Upsell", bg: "bg-[#e0fffe]", icon: upsell },
  { label: "Stock Report", bg: "bg-[#fce6e4]", icon: bars },
  { label: "Sales Order Report", bg: "bg-[#fce6e4]", icon: checklist },
  { label: "Manual Price vs Units Price", bg: "bg-[#fffdea]", icon: tag },
  { label: "Pricing Patterns", bg: "bg-[#d6f6d2]", icon: bars },
  { label: "Recap Report", bg: "bg-[#fff4ea]", icon: target },
  { label: "", bg: "bg-[#e0fffe]", icon: upsell },
];

const ReportList = () => (
  <ul className="w-[515px] shrink-0 rounded-lg bg-white px-[3px] shadow-[0_0_12px_rgba(0,0,0,0.045)]">
    {REPORTS.map((r, i) => (
      <li key={i} className="flex h-[78.300px] items-center gap-[8px] border-b border-[#f5f6f8] pt-[3px] pl-2 text-[14.500px] font-bold text-[#24282d] first:h-[76px] first:pt-0">
        <span className={"flex size-[45px] items-center justify-center rounded-lg " + r.bg}>
          <svg className="size-[23px] overflow-visible" viewBox="0 0 23 23">{r.icon}</svg>
        </span>
        <span>{r.label}</span>
      </li>
    ))}
  </ul>
);

const YearSelect = () => (
  <div className="flex h-[36px] w-[103px] items-center rounded-lg border border-[#e0312b] pl-[9px]">
    <span className="w-[45px] pt-px font-['Noto_Sans','Open_Sans',sans-serif] text-[12.500px] leading-none font-medium text-[#e0312b]">2024</span>
    <svg className="h-[8px] w-[8px]" viewBox="0 0 8 8"><path d="M0.800 0.800 L7.200 7.200 M7.200 0.800 L0.800 7.200" stroke="#8d8d8d" strokeWidth="1.100" /></svg>
    <svg className="ml-[22px] h-[4px] w-[8px]" viewBox="0 0 8 4"><path d="M0 0 H8 L4 4Z" fill="#8d8d8d" /></svg>
  </div>
);

export default function App() {
  return (
    <div className="flex h-[945px] w-[1920px] overflow-hidden bg-[#f6f7f9] font-[Lato,'Open_Sans',sans-serif] [font-variant-ligatures:none]">
      <Sidebar />
      <main className="flex flex-1 flex-col pt-[18px] pr-[27px] pl-[27px]">
        <TopBar />
        <h1 className="mt-[14px] h-[47px] shrink-0 text-[23.500px] leading-[38px] font-bold text-[#1f2328]">Home</h1>
        <section className="flex h-[900px] shrink-0 justify-between rounded-t-xl bg-white pt-[14px] pr-[14px]">
          <div className="flex flex-col pt-[8px] pl-[9px]">
            <div className="mb-[-4px] pl-[19px]"><YearSelect /></div>
            <UsMap />
          </div>
          <ReportList />
        </section>
      </main>
      <div className="flex w-[4px] flex-col bg-[#c6c8ca]">
        <div className="h-[817px] rounded-b-sm bg-[#62bd57]" />
      </div>
    </div>
  );
}
